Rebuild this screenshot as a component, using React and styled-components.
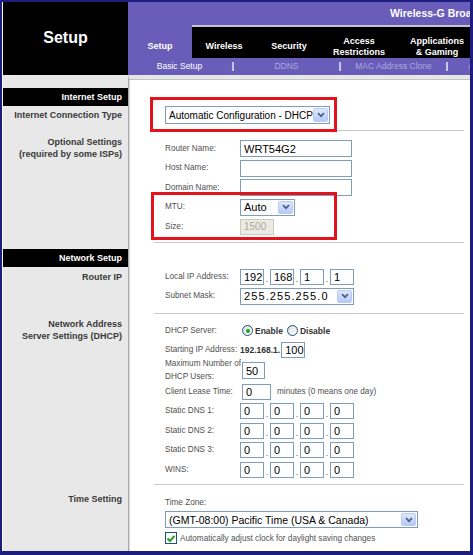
import React from "react";
import styled, { createGlobalStyle } from "styled-components";

const GlobalStyle = createGlobalStyle`
  html, body { margin: 0; padding: 0; background: #fff; }
  body { font-family: "Liberation Sans", Arial, sans-serif; }
  * { box-sizing: border-box; }
`;

const PURPLE = "#6a5db9";
const BORDER = "#7f9db9";

const Frame = styled.div`
  position: relative;
  width: 473px;
  height: 555px;
  border-style: solid;
  border-color: #1d1d80;
  border-width: 2px 3px 4px 2px;
  padding-left: 1px;
  background: #fff;
  overflow: hidden;
  display: flex;
  flex-direction: column;
  font-family: "Liberation Sans", Arial, sans-serif;
`;

/* ---------- header ---------- */

const Header = styled.div`
  display: flex;
  height: 73px;
  flex: none;
`;

const Brand = styled.div`
  width: 125px;
  flex: none;
  background: #000;
  color: #fff;
  font-size: 16px;
  font-weight: bold;
  line-height: 18px;
  text-align: center;
  padding-top: 27px;
`;

const Nav = styled.div`
  flex: 1;
  display: flex;
  flex-direction: column;
  min-width: 0;
`;

const ProductBar = styled.div`
  height: 23px;
  background: ${PURPLE};
  color: #fff;
  font-size: 10.5px;
  font-weight: bold;
  line-height: 23px;
  padding-left: 262px;
  white-space: nowrap;
  overflow: hidden;
`;

const TabRow = styled.div`
  height: 33px;
  display: flex;
  background: ${PURPLE};
  overflow: hidden;
`;

const Tab = styled.div`
  flex: none;
  width: ${(p) => p.$w}px;
  background: ${(p) => (p.$active ? "transparent" : "#000")};
  box-shadow: ${(p) => (p.$active ? "none" : "inset 0 2px 0 #c4c4cf")};
  padding-top: 10px;
  display: flex;
  align-items: center;
  justify-content: center;
  text-align: center;
  color: #fff;
  font-size: 9px;
  font-weight: bold;
  line-height: 11px;
  white-space: nowrap;
`;

const SubNav = styled.div`
  height: 17px;
  display: flex;
  background: ${PURPLE};
  padding-left: 1px;
  font-size: 8.5px;
  line-height: 17px;
  white-space: nowrap;
  overflow: hidden;
`;

const SubItem = styled.span`
  flex: none;
  width: 101px;
  text-align: ${(p) => (p.$left ? "left" : "center")};
  padding-left: ${(p) => (p.$left ? 18 : 0)}px;
  color: ${(p) => (p.$active ? "#fff" : "#aca7de")};
`;

const SubSep = styled.span`
  flex: none;
  width: 6px;
  text-align: center;
  color: #fff;
  font-weight: bold;
`;

/* ---------- body ---------- */

const Body = styled.div`
  flex: 1;
  display: flex;
  min-height: 0;
`;

const SideCol = styled.div`
  width: 125px;
  flex: none;
  background: #e8e8e8;
  display: flex;
  flex-direction: column;
`;

const SectionBar = styled.div`
  margin-top: ${(p) => p.$mt}px;
  height: 18px;
  background: #000;
  color: #fff;
  font-size: 9px;
  font-weight: bold;
  line-height: 18px;
  text-align: right;
  padding-right: 6px;
`;

const SideLabel = styled.div`
  margin-top: ${(p) => p.$mt}px;
  color: #3a3a3a;
  font-size: 9px;
  font-weight: bold;
  line-height: 12px;
  text-align: right;
  padding-right: 6px;
`;

const MainCol = styled.div`
  flex: 1;
  background: #fff;
  border-left: 1px solid #a9a9a9;
  border-top: 4px solid #e6e6e6;
  box-shadow: inset 0 1px 0 #c2c2c2, inset 1px 0 0 #dadada;
`;

const Section = styled.div`
  margin: 0 6px 0 25px;
  padding: ${(p) => p.$pt}px 0 ${(p) => p.$pb || 0}px 11px;
  border-bottom: ${(p) => (p.$line ? "1px solid #c9c9c9" : "none")};
`;

const Row = styled.div`
  display: flex;
  align-items: center;
  height: ${(p) => p.$h || 17}px;
  margin-top: ${(p) => p.$mt || 0}px;
`;

const FieldLabel = styled.span`
  width: 75px;
  flex: none;
  color: #505050;
  font-size: 8.2px;
  line-height: ${(p) => p.$lh || 12}px;
  white-space: nowrap;
`;

const Note = styled.div`
  color: #505050;
  font-size: 8.2px;
  line-height: 12px;
`;

const TextBox = styled.input`
  width: ${(p) => p.$w}px;
  height: ${(p) => p.$h || 17}px;
  margin-left: ${(p) => p.$ml || 0}px;
  border: 1px solid ${BORDER};
  padding: 0 0 0 3px;
  font-family: "Liberation Sans", Arial, sans-serif;
  font-size: ${(p) => p.$fs || 10.5}px;
  color: #000;
  background: #fff;
  outline: none;

  &:disabled {
    background: #ebebe4;
    color: #aca899;
    border-color: #c9c9c0;
  }
`;

const SelectBox = styled.div`
  display: flex;
  align-items: center;
  width: ${(p) => p.$w}px;
  height: ${(p) => p.$h || 17}px;
  margin-top: ${(p) => p.$mt || 0}px;
  border: 1px solid ${BORDER};
  background: #fff;
  padding-left: 3px;
  color: #000;
  font-size: ${(p) => p.$fs || 10.5}px;
`;

const SelectText = styled.span`
  flex: 1;
  white-space: nowrap;
  overflow: hidden;
  letter-spacing: ${(p) => p.$ls || 0}px;
`;

const SelectArrow = styled.span`
  flex: none;
  width: 15px;
  height: calc(100% - 2px);
  margin-right: 1px;
  border: 1px solid #b8caf5;
  border-radius: 2px;
  background: linear-gradient(#dde7fe, #b7c9f6);
  display: flex;
  align-items: center;
  justify-content: center;
`;

const Octet = styled(TextBox)`
  width: 24px;
  height: 16px;
  font-size: 11px;
`;

const Dot = styled.span`
  flex: none;
  width: 6px;
  text-align: center;
  color: #555;
  font-size: 9px;
  align-self: flex-end;
  line-height: 12px;
`;

const Radio = styled.span`
  position: relative;
  flex: none;
  width: 11px;
  height: 11px;
  border-radius: 50%;
  border: 1px solid #1c5180;
  background: linear-gradient(135deg, #dcdcd7, #fff);
  margin-left: ${(p) => p.$ml || 0}px;

  &::after {
    content: "";
    display: ${(p) => (p.$on ? "block" : "none")};
    position: absolute;
    left: 2.5px;
    top: 2.5px;
    width: 4px;
    height: 4px;
    border-radius: 50%;
    background: #21a121;
  }
`;

const RadioText = styled.span`
  margin-left: 2px;
  color: #333;
  font-size: 8.5px;
  font-weight: bold;
`;

const Prefix = styled.span`
  color: #333;
  font-size: 8.5px;
  font-weight: bold;
`;

const Hint = styled.span`
  margin-left: 6px;
  color: #505050;
  font-size: 8.2px;
`;

const CheckBox = styled.span`
  flex: none;
  width: 12px;
  height: 12px;
  border: 1px solid #1c5180;
  background: #fff;
  display: flex;
  align-items: center;
  justify-content: center;
`;

const CheckText = styled.span`
  margin-left: 3px;
  color: #505050;
  font-size: 8.2px;
  white-space: nowrap;
`;

/* annotation boxes drawn over the page */
const Highlight = styled.div`
  position: absolute;
  left: ${(p) => p.$x}px;
  top: ${(p) => p.$y}px;
  width: ${(p) => p.$w}px;
  height: ${(p) => p.$h}px;
  border: 3px solid #e3121b;
  pointer-events: none;
`;

const Chevron = () => (
  <svg width="8" height="6" viewBox="0 0 8 6">
    <path d="M1 1.2 L4 4.2 L7 1.2" fill="none" stroke="#4d6185" strokeWidth="1.7" />
  </svg>
);

const Select = ({ value, w, h, fs, ls, mt }) => (
  <SelectBox $w={w} $h={h} $fs={fs} $mt={mt}>
    <SelectText $ls={ls}>{value}</SelectText>
    <SelectArrow>
      <Chevron />
    </SelectArrow>
  </SelectBox>
);

const IpField = ({ parts }) => (
  <>
    {parts.map((v, i) => (
      <React.Fragment key={i}>
        {i > 0 && <Dot>.</Dot>}
        <Octet readOnly value={v} />
      </React.Fragment>
    ))}
  </>
);

const tabs = [
  { label: "Setup", w: 64, active: true },
  { label: "Wireless", w: 64 },
  { label: "Security", w: 66 },
  { label: ["Access", "Restrictions"], w: 74 },
  { label: ["Applications", "& Gaming"], w: 82 },
];

const dnsRows = ["Static DNS 1:", "Static DNS 2:", "Static DNS 3:", "WINS:"];

export default function App() {
  return (
    <>
      <GlobalStyle />
      <Frame>
        <Header>
          <Brand>Setup</Brand>
          <Nav>
            <ProductBar>Wireless-G Broadband Router</ProductBar>
            <TabRow>
              {tabs.map((t, i) => (
                <Tab key={i} $w={t.w} $active={t.active}>
                  {Array.isArray(t.label) ? (
                    <span>
                      {t.label[0]}
                      <br />
                      {t.label[1]}
                    </span>
                  ) : (
                    t.label
                  )}
                </Tab>
              ))}
            </TabRow>
            <SubNav>
              <SubItem $active>Basic Setup</SubItem>
              <SubSep>|</SubSep>
              <SubItem>DDNS</SubItem>
              <SubSep>|</SubSep>
              <SubItem>MAC Address Clone</SubItem>
              <SubSep>|</SubSep>
              <SubItem $left>Advanced Routing</SubItem>
            </SubNav>
          </Nav>
        </Header>

        <Body>
          <SideCol>
            <SectionBar $mt={13}>Internet Setup</SectionBar>
            <SideLabel $mt={3}>Internet Connection Type</SideLabel>
            <SideLabel $mt={15}>
              Optional Settings
              <br />
              (required by some ISPs)
            </SideLabel>
            <SectionBar $mt={89}>Network Setup</SectionBar>
            <SideLabel $mt={4}>Router IP</SideLabel>
            <SideLabel $mt={35}>
              Network Address
              <br />
              Server Settings (DHCP)
            </SideLabel>
            <SideLabel $mt={151}>Time Setting</SideLabel>
          </SideCol>

          <MainCol>
            <Section $pt={27} $pb={6} $line>
              <Select value="Automatic Configuration - DHCP" w={165} h={18} fs={10} />
            </Section>

            <Section $pt={9} $pb={7} $line>
              <Row>
                <FieldLabel>Router Name:</FieldLabel>
                <TextBox readOnly value="WRT54G2" $w={112} $fs={11} />
              </Row>
              <Row $mt={2.5}>
                <FieldLabel>Host Name:</FieldLabel>
                <TextBox readOnly value="" $w={112} />
              </Row>
              <Row $mt={2.5}>
                <FieldLabel>Domain Name:</FieldLabel>
                <TextBox readOnly value="" $w={112} />
              </Row>
              <Row $mt={2.5}>
                <FieldLabel>MTU:</FieldLabel>
                <Select value="Auto" w={55} fs={11} />
              </Row>
              <Row $mt={2.5}>
                <FieldLabel>Size:</FieldLabel>
                <TextBox disabled value="1500" $w={34} $h={16} $fs={10} />
              </Row>
            </Section>

            <Section $pt={25} $pb={8} $line>
              <Row>
                <FieldLabel>Local IP Address:</FieldLabel>
                <IpField parts={["192", "168", "1", "1"]} />
              </Row>
              <Row $mt={2.5}>
                <FieldLabel>Subnet Mask:</FieldLabel>
                <Select value="255.255.255.0" w={114} fs={11} ls={1.1} />
              </Row>
            </Section>

            <Section $pt={8.5} $pb={6} $line>
              <Row>
                <FieldLabel>DHCP Server:</FieldLabel>
                <Radio $on $ml={2} />
                <RadioText>Enable</RadioText>
                <Radio $ml={4} />
                <RadioText>Disable</RadioText>
              </Row>
              <Row $h={16} $mt={3}>
                <FieldLabel>Starting IP Address:</FieldLabel>
                <Prefix>192.168.1.</Prefix>
                <TextBox readOnly value="100" $w={24} $h={16} $fs={11} $ml={1} />
              </Row>
              <Row $h={25}>
                <FieldLabel $lh={12.5}>
                  Maximum Number of
                  <br />
                  DHCP Users:
                </FieldLabel>
                <TextBox readOnly value="50" $w={23} $fs={11} $ml={2} />
              </Row>
              <Row>
                <FieldLabel>Client Lease Time:</FieldLabel>
                <TextBox readOnly value="0" $w={29} $h={16} $fs={11} $ml={2} />
                <Hint>minutes (0 means one day)</Hint>
              </Row>
              {dnsRows.map((label) => (
                <Row key={label} $mt={2.5}>
                  <FieldLabel>{label}</FieldLabel>
                  <IpField parts={["0", "0", "0", "0"]} />
                </Row>
              ))}
            </Section>

            <Section $pt={12}>
              <Note>Time Zone:</Note>
              <Select value="(GMT-08:00) Pacific Time (USA & Canada)" w={253} mt={2} />
              <Row $h={12} $mt={4}>
                <CheckBox>
                  <svg width="10" height="9" viewBox="0 0 10 9">
                    <path d="M1.5 4.5 L4 7 L8.5 1.8" fill="none" stroke="#21a121" strokeWidth="2" />
                  </svg>
                </CheckBox>
                <CheckText>Automatically adjust clock for daylight saving changes</CheckText>
              </Row>
            </Section>
          </MainCol>
        </Body>

        <Highlight $x={148} $y={95} $w={187} $h={35} />
        <Highlight $x={149} $y={190} $w={186} $h={48} />
      </Frame>
    </>
  );
}
